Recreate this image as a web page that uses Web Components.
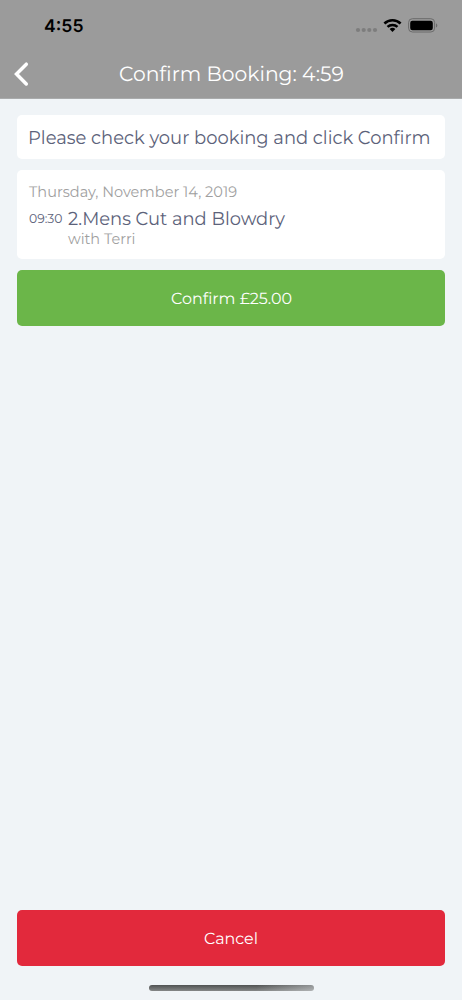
<!DOCTYPE html>
<html lang="en">
<head>
<meta charset="utf-8">
<title>Confirm Booking</title>
<style>
html, body { margin: 0; height: 100%; background: #f0f4f7; overflow: hidden; }
body { font-family: Montserrat, Inter, "Open Sans", sans-serif; }
</style>
</head>
<body>
<booking-screen></booking-screen>
<script>
const define = (name, html, setup) => customElements.define(name, class extends HTMLElement {
  connectedCallback() {
    if (this.shadowRoot) return;
    const t = document.createElement('template');
    t.innerHTML = html;
    this.attachShadow({ mode: 'open' }).append(t.content.cloneNode(true));
    if (setup) setup(this, this.shadowRoot);
  }
});

// One line of text set to an exact measure: w = width, h = line box, base = baseline, size = font size.
define('fit-text', `
<style>
:host { display: block; flex: none; }
svg { display: block; overflow: visible; }
text { fill: currentColor; text-rendering: geometricPrecision; }
</style>
<svg><text x="0" lengthAdjust="spacingAndGlyphs"></text></svg>`, (el, root) => {
  const svg = root.querySelector('svg'), text = root.querySelector('text');
  const a = n => el.getAttribute(n);
  svg.setAttribute('width', a('w'));
  svg.setAttribute('height', a('h'));
  text.setAttribute('y', a('base'));
  text.setAttribute('font-size', a('size'));
  text.setAttribute('font-weight', a('weight') || 370);
  text.setAttribute('textLength', a('w'));
  text.textContent = a('label');
});

define('status-bar', `
<style>
:host { display: flex; height: 50px; box-sizing: border-box; padding: 0 24.5px 0 44px; color: #000; justify-content: space-between; font-family: Inter, sans-serif; }
</style>
<fit-text label="4:55" w="39.5" h="50" base="32" size="17.4" weight="600"></fit-text>
<svg width="84" height="50" viewBox="354 0 84 50">
  <g fill="#7d7d7d"><circle cx="358" cy="30" r="2.1"/><circle cx="363.7" cy="30" r="2.1"/><circle cx="369.3" cy="30" r="2.1"/><circle cx="375" cy="30" r="2.1"/></g>
  <g fill="none" stroke="#000" stroke-width="2.5"><path d="M384.4 23.5a11.6 11.6 0 0 1 16.2 0"/><path d="M387.5 26.9a7.3 7.3 0 0 1 10 0"/></g>
  <path d="M389.6 29.1a4.3 4.3 0 0 1 5.8 0L392.500 32z" fill="#000"/>
  <rect x="408.600" y="18.700" width="26" height="13.300" rx="3.800" fill="none" stroke="#6b6b6b"/>
  <rect x="410.200" y="20.700" width="22.600" height="9.600" rx="2.200" fill="#000"/>
  <path d="M436 23.200c1.800.7 1.800 3.700 0 4.400z" fill="#6b6b6b"/>
</svg>`);

define('nav-bar', `
<style>
:host { display: grid; grid-template-columns: 118.500px 1fr; height: 48px; color: #fff; }
</style>
<svg width="40" height="48" viewBox="0 50 40 48"><path d="M26.300 64.200L16.500 74L26.300 83.900" fill="none" stroke="#fff" stroke-width="3.500" stroke-linecap="round" stroke-linejoin="miter"/></svg>
<fit-text label="Confirm Booking: 4:59" w="224.800" h="48" base="31" size="20.700"></fit-text>`);

define('info-card', `
<style>
:host { display: block; box-sizing: border-box; background: #fff; border-radius: 5px; color: #5c627a; }
</style>
<slot></slot>`);

define('booking-item', `
<style>
:host { display: grid; grid-template-columns: 39px 1fr; }
.with { color: #9f9f9f; }
</style>
<fit-text label="09:30" w="33.500" h="26" base="18" size="12.900"></fit-text>
<div>
  <fit-text label="2.Mens Cut and Blowdry" w="217" h="26" base="20" size="18.600"></fit-text>
  <fit-text class="with" label="with Terri" w="67.500" h="20" base="12.700" size="15.200"></fit-text>
</div>`);

define('action-button', `
<style>
:host { display: block; height: 56px; border-radius: 5px; color: #fff; }
button { all: unset; display: flex; width: 100%; height: 100%; justify-content: center; }
</style>
<button><slot></slot></button>`);

define('booking-screen', `
<style>
:host { display: flex; flex-direction: column; height: 1000px; width: 462px; background: #f0f4f7; }
header { flex: none; background: #9b9b9b; height: 98px; border-bottom: 1px solid #a9abac; }
main { flex: 1; display: flex; flex-direction: column; padding: 16px 17px 0; }
.notice { height: 44.400px; margin-bottom: 11px; padding-left: 10.500px; }
.booking { height: 89px; margin-bottom: 11px; padding: 0 12px; }
.date { color: #9f9f9f; }
.ok { background: #6bb649; height: 56px; }
.cancel { background: #e2293c; margin-top: auto; margin-bottom: 19.500px; }
.home { width: 165px; height: 6px; border-radius: 3px; margin: 0 auto 9px; background: linear-gradient(90deg, transparent 65%, #f0f4f766 100%), linear-gradient(#505252, #6b6d6d 50%, #858787); }
</style>
<header><status-bar></status-bar><nav-bar></nav-bar></header>
<main>
  <info-card class="notice"><fit-text label="Please check your booking and click Confirm" w="402.500" h="44" base="28.600" size="18.700"></fit-text></info-card>
  <info-card class="booking">
    <fit-text class="date" label="Thursday, November 14, 2019" w="208" h="34.500" base="26.600" size="15.200"></fit-text>
    <booking-item></booking-item>
  </info-card>
  <action-button class="ok"><fit-text label="Confirm £25.00" w="121" h="56" base="34" size="16"></fit-text></action-button>
  <action-button class="cancel"><fit-text label="Cancel" w="54" h="56" base="33.600" size="16"></fit-text></action-button>
  <div class="home"></div>
</main>`);
</script>
</body>
</html>
